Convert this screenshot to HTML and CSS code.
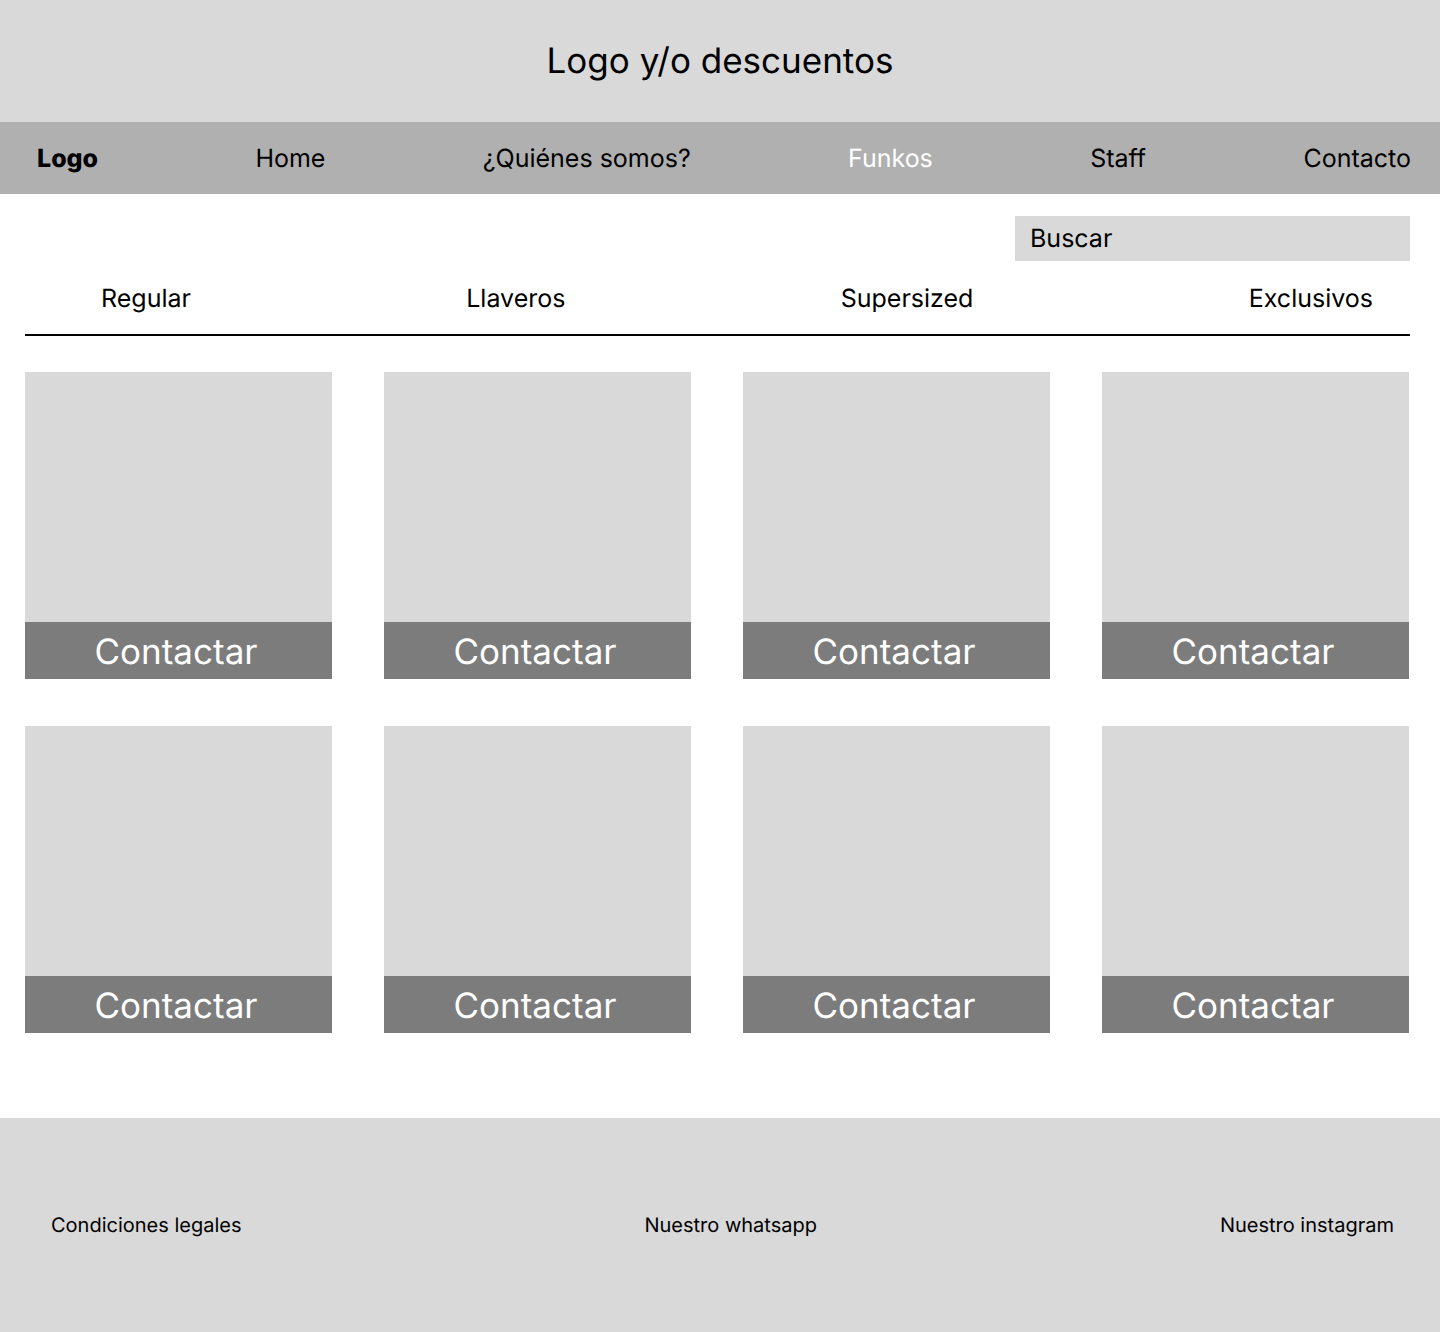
FILE: index.html
```html
<!DOCTYPE html>
<html lang="es">
<head>
  <meta charset="utf-8">
  <meta name="viewport" content="width=device-width, initial-scale=1">
  <title>Funkos</title>
  <link rel="stylesheet" href="styles.css">
</head>
<body>
  <header>
    <div class="banner">Logo y/o descuentos</div>
    <nav class="navbar">
      <a class="navbar-logo" href="#">Logo</a>
      <a href="#">Home</a>
      <a href="#">¿Quiénes somos?</a>
      <a class="is-active" href="#" aria-current="page">Funkos</a>
      <a href="#">Staff</a>
      <a href="#">Contacto</a>
    </nav>
  </header>
  <main class="content">
    <form class="search">
      <input class="search-input" type="search" placeholder="Buscar" aria-label="Buscar">
    </form>
    <nav class="categories">
      <a href="#">Regular</a>
      <a href="#">Llaveros</a>
      <a href="#">Supersized</a>
      <a href="#">Exclusivos</a>
    </nav>
    <section class="products">
      <article class="card"><div class="card-image"></div><button class="card-button" type="button">Contactar</button></article>
      <article class="card"><div class="card-image"></div><button class="card-button" type="button">Contactar</button></article>
      <article class="card"><div class="card-image"></div><button class="card-button" type="button">Contactar</button></article>
      <article class="card"><div class="card-image"></div><button class="card-button" type="button">Contactar</button></article>
      <article class="card"><div class="card-image"></div><button class="card-button" type="button">Contactar</button></article>
      <article class="card"><div class="card-image"></div><button class="card-button" type="button">Contactar</button></article>
      <article class="card"><div class="card-image"></div><button class="card-button" type="button">Contactar</button></article>
      <article class="card"><div class="card-image"></div><button class="card-button" type="button">Contactar</button></article>
    </section>
  </main>
  <footer class="footer">
    <a href="#">Condiciones legales</a>
    <a href="#">Nuestro whatsapp</a>
    <a href="#">Nuestro instagram</a>
  </footer>
</body>
</html>
```
FILE: styles.css
```css
* {
  box-sizing: border-box;
}

body {
  margin: 0;
  background: #fff;
  color: #000;
  font-family: Inter, sans-serif;
  font-size: 25px;
  line-height: 30px;
  text-rendering: geometricPrecision;
}

a {
  color: inherit;
  text-decoration: none;
}

.banner {
  padding: 39px 24px;
  background: #d9d9d9;
  font-size: 35px;
  line-height: 44px;
  text-align: center;
}

.navbar {
  display: flex;
  justify-content: space-between;
  padding: 22px 29px 20px 37px;
  background: #b0b0b0;
}

.navbar-logo {
  font-weight: 800;
}

.navbar .is-active {
  color: #fff;
}

.content {
  padding: 22px 30px 85px 25px;
}

.search {
  display: flex;
  justify-content: flex-end;
}

.search-input {
  width: 395px;
  height: 45px;
  padding: 0 15px;
  border: 0;
  border-radius: 0;
  background: #d9d9d9;
  color: #000;
  font: inherit;
  text-rendering: inherit;
  appearance: none;
}

.search-input::placeholder {
  color: #000;
  opacity: 1;
}

.categories {
  display: flex;
  justify-content: space-between;
  padding: 23px 37px 20px 76px;
  border-bottom: 2px solid #000;
}

.products {
  display: grid;
  grid-template-columns: repeat(4, 1fr);
  gap: 47px 52px;
  padding: 36px 1px 0 0;
}

.card {
  display: flex;
  flex-direction: column;
}

.card-image {
  height: 250px;
  background: #d9d9d9;
}

.card-button {
  padding: 8px 5px 5px 0;
  border: 0;
  background: #7c7c7c;
  color: #fff;
  font-family: inherit;
  font-size: 35px;
  line-height: 44px;
  text-rendering: inherit;
}

.footer {
  display: flex;
  justify-content: space-between;
  padding: 95px 46px 95px 51px;
  background: #d9d9d9;
  font-size: 20px;
  line-height: 24px;
}
```
